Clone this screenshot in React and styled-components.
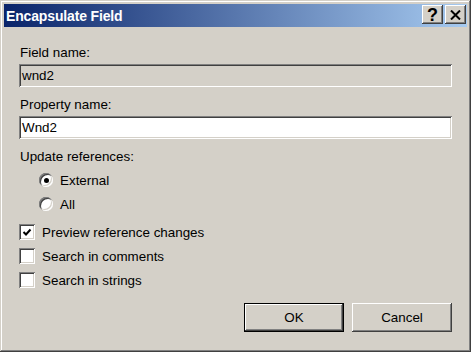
import React from 'react'
import styled, { createGlobalStyle } from 'styled-components'

const GlobalStyle = createGlobalStyle`
  html, body {
    margin: 0;
    padding: 0;
    background: #d4d0c8;
  }
  body {
    font-family: "Liberation Sans", Arial, sans-serif;
    font-size: 13.4px;
    color: #000;
  }
`

const Window = styled.div`
  width: 471px;
  height: 352px;
  box-sizing: border-box;
  padding: 4px;
  background: #d4d0c8;
  display: flex;
  flex-direction: column;
  box-shadow:
    inset -1px -1px #404040,
    inset 1px 1px #d4d0c8,
    inset -2px -2px #808080,
    inset 2px 2px #ffffff;
`

const TitleBar = styled.div`
  height: 23px;
  display: flex;
  align-items: flex-start;
  padding-right: 1px;
  background: linear-gradient(to right, #0a246a, #a6caf0);
`

const Title = styled.div`
  flex: 1;
  align-self: center;
  padding-left: 2px;
  color: #fff;
  font-weight: bold;
  font-size: 14px;
  letter-spacing: -0.15px;
  line-height: 16px;
  white-space: nowrap;
`

const CaptionButton = styled.div`
  width: 21px;
  height: 19px;
  margin-top: 1px;
  margin-left: ${p => (p.$gap ? '2px' : '0')};
  box-sizing: border-box;
  background: #d4d0c8;
  display: flex;
  align-items: center;
  justify-content: center;
  font-weight: bold;
  font-size: 18px;
  line-height: 1;
  box-shadow:
    inset -1px -1px #404040,
    inset 1px 1px #ffffff,
    inset -2px -2px #808080,
    inset 2px 2px #d4d0c8;
`

const Content = styled.div`
  flex: 1;
  display: flex;
  flex-direction: column;
  padding: 18px 15px 0 15px;
`

const Label = styled.div`
  height: 16px;
  line-height: 16px;
  margin-bottom: 3px;
  padding-left: 1px;
`

const TextBox = styled.div`
  height: 23px;
  box-sizing: border-box;
  padding: 0 3px;
  display: flex;
  align-items: center;
  margin-bottom: 10px;
  background: ${p => (p.$disabled ? '#d4d0c8' : '#ffffff')};
  box-shadow:
    inset 1px 1px #808080,
    inset -1px -1px #ffffff,
    inset 2px 2px #404040,
    inset -2px -2px #d4d0c8;
`

const OptionList = styled.div`
  display: flex;
  flex-direction: column;
  margin-top: ${p => p.$top}px;
  padding-left: ${p => p.$indent}px;
`

const OptionRow = styled.div`
  height: 24px;
  display: flex;
  align-items: center;
  gap: 7px;
`

const Radio = styled.div`
  width: 14px;
  height: 14px;
  border-radius: 50%;
  box-sizing: border-box;
  background: #fff;
  display: flex;
  align-items: center;
  justify-content: center;
  box-shadow:
    inset 1px 1px #808080,
    inset -1px -1px #ffffff,
    inset 2px 2px #404040,
    inset -2px -2px #d4d0c8;
  &::after {
    content: '';
    width: 5px;
    height: 5px;
    border-radius: 50%;
    background: #000;
    display: ${p => (p.$on ? 'block' : 'none')};
  }
`

const Check = styled.div`
  width: 16px;
  height: 16px;
  box-sizing: border-box;
  background: #fff;
  display: flex;
  align-items: center;
  justify-content: center;
  box-shadow:
    inset 1px 1px #808080,
    inset -1px -1px #ffffff,
    inset 2px 2px #404040,
    inset -2px -2px #d4d0c8;
`

const ButtonRow = styled.div`
  display: flex;
  justify-content: flex-end;
  gap: 8px;
  margin-top: 11px;
`

const Button = styled.div`
  width: 100px;
  height: 29px;
  box-sizing: border-box;
  display: flex;
  align-items: center;
  justify-content: center;
  background: #d4d0c8;
  ${p =>
    p.$default
      ? `box-shadow:
          inset 0 0 0 1px #000,
          inset -2px -2px #404040,
          inset 2px 2px #ffffff,
          inset -3px -3px #808080;`
      : `box-shadow:
          inset -1px -1px #404040,
          inset 1px 1px #ffffff,
          inset -2px -2px #808080,
          inset 2px 2px #d4d0c8;`}
`

const CloseIcon = () => (
  <svg width="11" height="10" viewBox="0 0 11 10">
    <path d="M1 0.5 L10 9.5 M10 0.5 L1 9.5" stroke="#000" strokeWidth="2" fill="none" />
  </svg>
)

const CheckMark = () => (
  <svg width="10" height="9" viewBox="0 0 10 9">
    <polyline points="1.5,4 4,6.5 8.5,1.5" stroke="#000" strokeWidth="2" fill="none" />
  </svg>
)

const App = () => {
  return (
    <>
      <GlobalStyle />
      <Window>
        <TitleBar>
          <Title>Encapsulate Field</Title>
          <CaptionButton>?</CaptionButton>
          <CaptionButton $gap>
            <CloseIcon />
          </CaptionButton>
        </TitleBar>
        <Content>
          <Label>Field name:</Label>
          <TextBox $disabled>wnd2</TextBox>
          <Label>Property name:</Label>
          <TextBox>Wnd2</TextBox>
          <Label>Update references:</Label>
          <OptionList $top={0} $indent={20}>
            <OptionRow>
              <Radio $on />
              <span>External</span>
            </OptionRow>
            <OptionRow>
              <Radio />
              <span>All</span>
            </OptionRow>
          </OptionList>
          <OptionList $top={4} $indent={0}>
            <OptionRow>
              <Check>
                <CheckMark />
              </Check>
              <span>Preview reference changes</span>
            </OptionRow>
            <OptionRow>
              <Check />
              <span>Search in comments</span>
            </OptionRow>
            <OptionRow>
              <Check />
              <span>Search in strings</span>
            </OptionRow>
          </OptionList>
          <ButtonRow>
            <Button $default>OK</Button>
            <Button>Cancel</Button>
          </ButtonRow>
        </Content>
      </Window>
    </>
  )
}

export default App
